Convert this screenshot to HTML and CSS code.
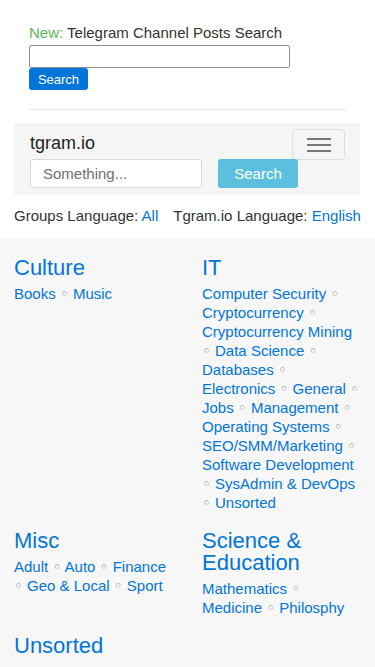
FILE: index.html
```html
<!DOCTYPE html>
<html lang="en">
<head>
    <meta charset="UTF-8">
    <meta name="viewport" content="width=device-width, initial-scale=1.0">
    <title>tgram.io</title>
    <link rel="stylesheet" href="styles.css">
</head>
<body>
    <div class="posts-search">
        <div class="posts-title"><span class="new">New:</span> Telegram Channel Posts Search</div>
        <form class="posts-form">
            <input type="text" class="posts-input">
            <button type="submit" class="posts-btn">Search</button>
        </form>
        <hr class="divider">
    </div>

    <nav class="navbar">
        <div class="navbar-top">
            <a class="brand" href="#">tgram.io</a>
            <button class="toggler" type="button">
                <span></span><span></span><span></span>
            </button>
        </div>
        <form class="navbar-form">
            <input type="text" class="search-input" placeholder="Something...">
            <button type="submit" class="search-btn">Search</button>
        </form>
    </nav>

    <div class="languages">
        Groups Language: <a href="#">All</a><span class="lang-gap"></span>Tgram.io Language: <a href="#">English</a>
    </div>

    <div class="categories">
        <div class="category">
            <h2><a href="#">Culture</a></h2>
            <div class="links"><a href="#">Books</a> <span class="dot">◦</span> <a href="#">Music</a></div>
        </div>
        <div class="category">
            <h2><a href="#">IT</a></h2>
            <div class="links"><a href="#">Computer Security</a> <span class="dot">◦</span> <a href="#">Cryptocurrency</a> <span class="dot">◦</span> <a href="#">Cryptocurrency Mining</a> <span class="dot">◦</span> <a href="#">Data Science</a> <span class="dot">◦</span> <a href="#">Databases</a> <span class="dot">◦</span> <a href="#">Electronics</a> <span class="dot">◦</span> <a href="#">General</a> <span class="dot">◦</span> <a href="#">Jobs</a> <span class="dot">◦</span> <a href="#">Management</a> <span class="dot">◦</span> <a href="#">Operating Systems</a> <span class="dot">◦</span> <a href="#">SEO/SMM/Marketing</a> <span class="dot">◦</span> <a href="#">Software Development</a> <span class="dot">◦</span> <a href="#">SysAdmin &amp; DevOps</a> <span class="dot">◦</span> <a href="#">Unsorted</a></div>
        </div>
        <div class="category">
            <h2><a href="#">Misc</a></h2>
            <div class="links"><a href="#">Adult</a> <span class="dot">◦</span> <a href="#">Auto</a> <span class="dot">◦</span> <a href="#">Finance</a> <span class="dot">◦</span> <a href="#">Geo &amp; Local</a> <span class="dot">◦</span> <a href="#">Sport</a></div>
        </div>
        <div class="category">
            <h2><a href="#">Science &amp; Education</a></h2>
            <div class="links"><a href="#">Mathematics</a> <span class="dot">◦</span> <a href="#">Medicine</a> <span class="dot">◦</span> <a href="#">Philosphy</a></div>
        </div>
        <div class="category">
            <h2><a href="#">Unsorted</a></h2>
        </div>
    </div>
</body>
</html>
```

FILE: styles.css
```css
body {
    font-family: "Liberation Sans", Arial, sans-serif;
    font-size: 15px;
    color: #333;
    background-color: #fff;
    margin: 0;
}
a {
    color: #0275d8;
    text-decoration: none;
}
.posts-search {
    padding: 23px 29px 0 29px;
}
.posts-title {
    line-height: 20px;
    margin-bottom: 2px;
}
.new {
    color: #5cb85c;
}
.posts-form {
    display: flex;
    flex-direction: column;
    align-items: flex-start;
}
.posts-input {
    width: 261px;
    height: 23px;
    box-sizing: border-box;
    border: 1px solid #8e8e8e;
    border-radius: 2px;
    margin: 0;
    padding: 2px 4px;
}
.posts-btn {
    font-family: "Liberation Sans", Arial, sans-serif;
    font-size: 13px;
    color: #fff;
    background-color: #0275d8;
    border: none;
    border-radius: 3px;
    width: 59px;
    height: 22px;
    margin: 0;
    padding: 0;
}
.divider {
    border: none;
    border-top: 1px solid #e6e6e6;
    margin: 19px 0 13px 0;
}
.navbar {
    background-color: #f5f5f5;
    margin: 0 15px 0 14px;
    padding: 6px 15px 7px 16px;
}
.navbar-top {
    display: flex;
    justify-content: space-between;
    align-items: flex-start;
    height: 30px;
}
.brand {
    color: #222;
    font-size: 18px;
    line-height: 28px;
}
.toggler {
    width: 53px;
    height: 31px;
    background: transparent;
    border: 1px solid #ddd;
    border-radius: 4px;
    display: flex;
    flex-direction: column;
    justify-content: center;
    align-items: center;
    gap: 4px;
    padding: 0;
}
.toggler span {
    display: block;
    width: 24px;
    height: 2px;
    background-color: #777;
}
.navbar-form {
    display: flex;
    gap: 16px;
}
.search-input {
    width: 172px;
    height: 29px;
    box-sizing: border-box;
    border: 1px solid #d9d9d9;
    border-radius: 3px;
    padding: 0 12px;
    margin: 0;
    font-family: "Liberation Sans", Arial, sans-serif;
    font-size: 15px;
    background: #fff;
}
.search-input::placeholder {
    color: #6f6f6f;
}
.search-btn {
    width: 80px;
    height: 29px;
    border: none;
    border-radius: 3px;
    background-color: #5bc0de;
    color: #fff;
    font-family: "Liberation Sans", Arial, sans-serif;
    font-size: 15px;
    padding: 0;
}
.languages {
    line-height: 22px;
    padding: 10px 14px 12px 14px;
    white-space: nowrap;
}
.lang-gap {
    display: inline-block;
    width: 15px;
}
.categories {
    background-color: #f7f7f7;
    display: grid;
    grid-template-columns: 1fr 1fr;
    column-gap: 29px;
    padding: 18px 14px 0 14px;
}
.category {
    margin-bottom: 18px;
}
.category h2 {
    font-size: 22px;
    font-weight: normal;
    line-height: 22px;
    margin: 0 0 5px 0;
}
.links {
    line-height: 19px;
}
.dot {
    font-family: "DejaVu Sans", sans-serif;
    font-size: 15px;
    line-height: 1;
    color: #888;
}
```
